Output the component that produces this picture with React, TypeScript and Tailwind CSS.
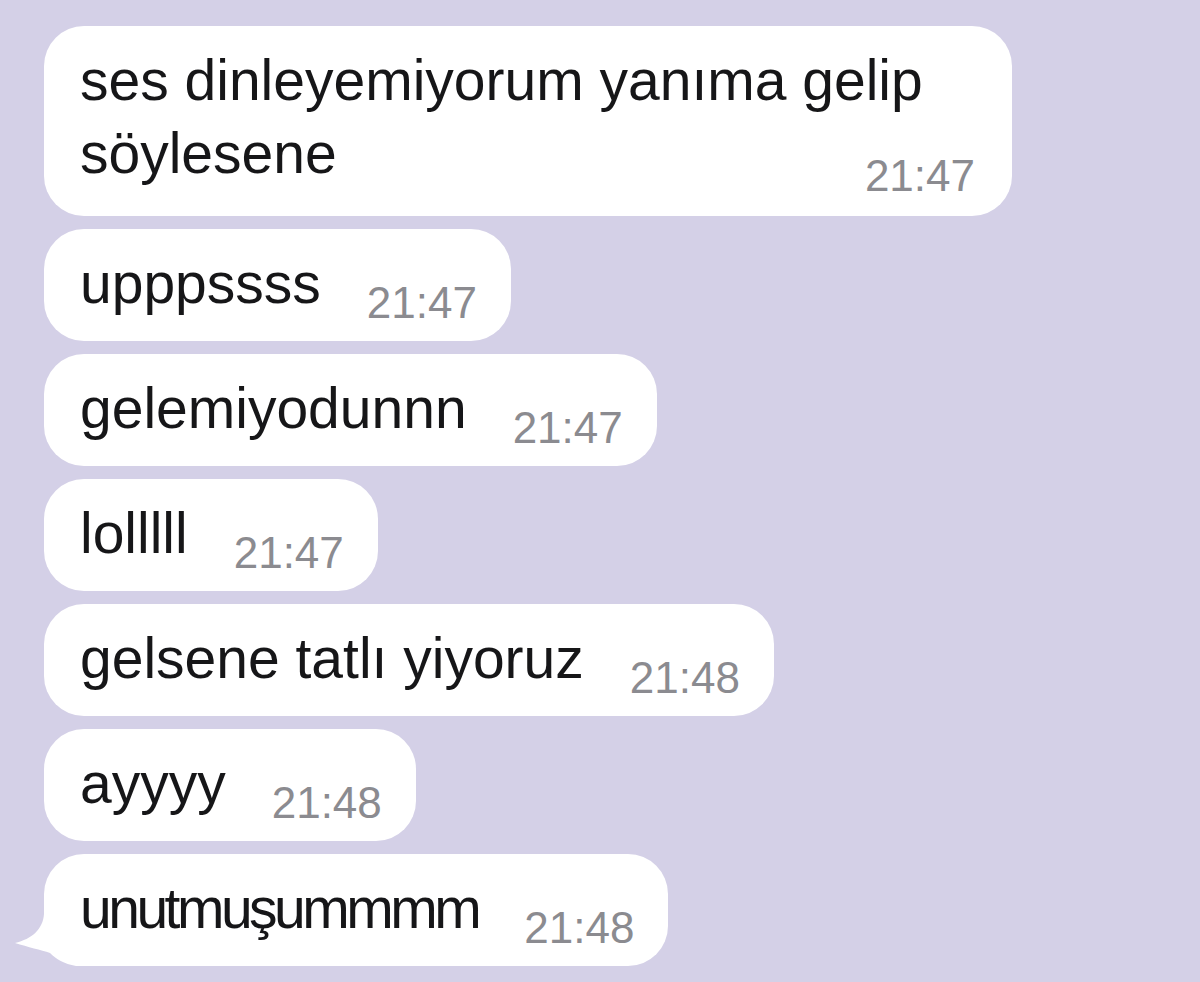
const msgs = [
  { text: "upppssss", time: "21:47", track: "" },
  { text: "gelemiyodunnn", time: "21:47", track: "" },
  { text: "lolllll", time: "21:47", track: "" },
  { text: "gelsene tatlı yiyoruz", time: "21:48", track: "" },
  { text: "ayyyy", time: "21:48", track: "" },
  { text: "unutmuşummmm", time: "21:48", track: "tracking-[-3.5px]", tail: true },
];

function Tail() {
  return (
    <svg className="absolute left-[-30px] top-[55px]" width="80" height="57" viewBox="0 0 80 57">
      <path
        d="M30 0 L30 5 C29 20 18 30 1 34 C14 38 27 41 36 44 C42 50 50 55 62 57 L80 57 L80 0 Z"
        fill="#ffffff"
      />
    </svg>
  );
}

export default function App() {
  return (
    <div
      className="w-[1200px] h-[982px] bg-[#d4d0e7] overflow-hidden pt-[26px] pl-[44px] flex flex-col items-start gap-[13px] text-[#161618]"
      style={{ fontFamily: '"Liberation Sans", Arial, sans-serif' }}
    >
      {/* first message, two lines */}
      <div className="w-[968px] bg-white rounded-[40px] pt-[18px] pb-[18px] pl-[36px] pr-[37px] flex flex-col">
        <p className="text-[57px] leading-[73px]">
          ses dinleyemiyorum yanıma gelip
          <br />
          söylesene
        </p>
        <span className="self-end -mt-[36px] text-[44px] leading-none text-[#8b8b90]">21:47</span>
      </div>

      {msgs.map((m, i) => (
        <div
          key={i}
          className="relative bg-white rounded-[40px] pt-[18px] pb-[16px] pl-[36px] pr-[34px] flex flex-row items-start"
        >
          {m.tail && <Tail />}
          <span className={"relative text-[57px] leading-[73px] whitespace-nowrap " + m.track}>{m.text}</span>
          <span className="relative ml-[46px] mt-[34px] text-[44px] leading-none text-[#8b8b90]">{m.time}</span>
        </div>
      ))}
    </div>
  );
}
